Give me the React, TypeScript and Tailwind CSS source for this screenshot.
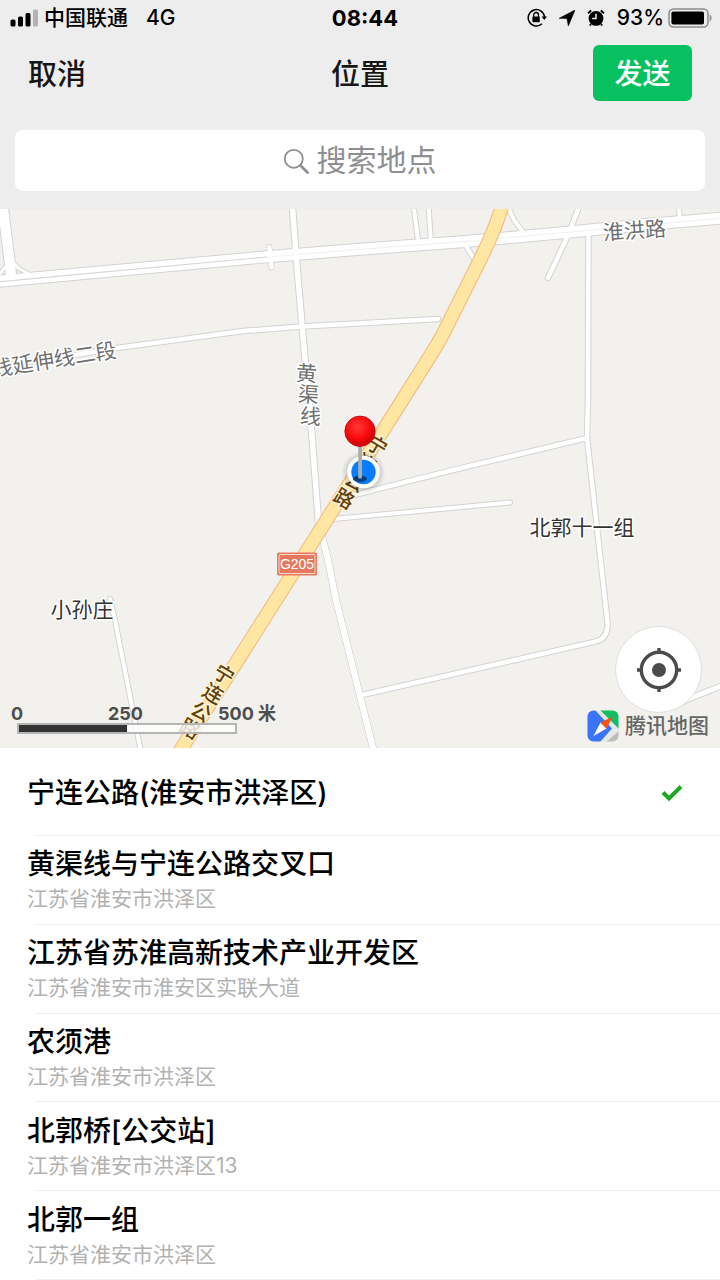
import React from "react";

type Place = { name: string; address?: string };

const places: Place[] = [
  { name: "宁连公路(淮安市洪泽区)" },
  { name: "黄渠线与宁连公路交叉口", address: "江苏省淮安市洪泽区" },
  { name: "江苏省苏淮高新技术产业开发区", address: "江苏省淮安市淮安区实联大道" },
  { name: "农须港", address: "江苏省淮安市洪泽区" },
  { name: "北郭桥[公交站]", address: "江苏省淮安市洪泽区13" },
  { name: "北郭一组", address: "江苏省淮安市洪泽区" },
];

function StatusBar() {
  return (
    <div className="grid h-9 grid-cols-[1fr_auto_1fr] items-center pr-2 pl-[10px] text-[21px] leading-7 text-black">
      <div className="flex items-center gap-[6px] font-medium">
        <svg className="h-[18px] w-7" viewBox="0 0 28 18" aria-hidden="true">
          <rect x="0.5" y="10.5" width="5" height="7" rx="1.6" />
          <rect x="8" y="7.5" width="5" height="10" rx="1.6" />
          <rect x="15.5" y="4" width="5" height="13.5" rx="1.6" />
          <rect x="23" y="0.5" width="5" height="17" rx="1.6" fill="#b3b3b3" />
        </svg>
        <span>中国联通</span>
        <span className="ml-3">4G</span>
      </div>
      <div className="pl-2 text-center text-[22px] font-bold">08:44</div>
      <div className="flex items-center justify-end">
        <svg className="mr-3 h-5 w-5" viewBox="0 0 20 20" aria-hidden="true">
          <path d="M15 15.8A8.2 8.2 0 1 1 17.6 9.2" fill="none" stroke="#000" strokeWidth="1.5" />
          <path d="M14.6 8.4h5.4l-2.7 3.6z" />
          <rect x="5.4" y="8.6" width="7.4" height="5.6" rx="0.8" />
          <path d="M6.7 9V6.9a2.4 2.4 0 0 1 4.8 0V9" fill="none" stroke="#000" strokeWidth="1.3" />
        </svg>
        <svg className="mr-3 h-4 w-4" viewBox="0 0 16 16" aria-hidden="true">
          <path d="M16 0 9.3 16 8 8.6.2 8.3z" stroke="#000" strokeWidth="0.6" strokeLinejoin="round" />
        </svg>
        <svg className="mr-3 h-[18px] w-[18px]" viewBox="0 0 18 18" aria-hidden="true">
          <circle cx="9" cy="9.4" r="7.4" />
          <path d="m4 15-1.2 1.600M14 15l1.200 1.600" stroke="#000" strokeWidth="1.800" />
          <path d="M1 4.300 4.200 1.400M17 4.300l-3.200-2.900" stroke="#000" strokeWidth="2" />
          <path d="M9 4.800v4.800H5.200" fill="none" stroke="#ededed" strokeWidth="1.500" />
        </svg>
        <span className="mr-1 font-medium">93%</span>
        <svg className="h-5 w-11 shrink-0" viewBox="0 0 44 20" aria-hidden="true">
          <rect x="1" y="1" width="39" height="18" rx="4.5" fill="none" stroke="#8a8a8a" strokeWidth="1.5" />
          <rect x="3.4" y="3.4" width="32.600" height="13.2" rx="1.8" />
          <path d="M41.600 6.5c2.800 1 2.800 6 0 7z" fill="#9a9a9a" />
        </svg>
      </div>
    </div>
  );
}

const minorRoads: [string, number][] = [
  ["M0 366 75 355 117 348 243 331 302 326.500 438 319", 4.5],
  ["M269.300 247 271.600 267.500", 4],
  ["M413.500 205 418.500 244", 4],
  ["M428.500 205 431 243", 4],
  ["M507 205 514 220 526 236", 4],
  ["M464 243 476 262", 4],
  ["M580 204 569 233 548 278", 4.5],
  ["M678.500 205 680.500 224", 4],
  ["M588.400 234 588 400 587 438 607.500 622Q608.500 639 595 641.600L480 668 364 694.500", 4.5],
  ["M587 438 460 468.300 350 496", 4.5],
  ["M328 519.500 510 502.500", 4],
  ["M680 703 693 697 724 685", 5],
  ["M110 599 115 620 141 752", 4],
];

const highwayNames = [
  ["宁", 377, 446], ["连", 366, 464], ["公", 355, 482], ["路", 344, 499],
  ["宁", 224, 675], ["连", 213, 694], ["公", 201, 712], ["路", 190, 729],
] as const;

function RoadMap() {
  const main = "M-4 281.500 267 256.800 360 249.300 465 241.500 560 233 640 225 724 218";
  const huangqu = "M292.300 205 296 255 302 325 311.500 430 318.500 522 328 560 336 600 374 752";
  const highway = "M503 203Q496 228 480 260L443 334Q438 344 415 380L276 600 178 754";
  return (
    <svg
      className="block h-full w-full"
      viewBox="0 209 720 539"
      preserveAspectRatio="xMidYMid slice"
      role="img"
      aria-label="地图"
    >
      <defs>
        <radialGradient id="pin" cx="42%" cy="35%" r="65%">
          <stop offset="0" stopColor="#ff3a36" />
          <stop offset="0.6" stopColor="#f80a0e" />
          <stop offset="1" stopColor="#c90008" />
        </radialGradient>
        <radialGradient id="glow">
          <stop offset="0.7" stopColor="#000" stopOpacity="0.16" />
          <stop offset="1" stopColor="#000" stopOpacity="0" />
        </radialGradient>
      </defs>
      <rect y="209" width="720" height="539" fill="#f2f1ed" />

      <g fill="none" strokeLinecap="round" strokeLinejoin="round">
        <g stroke="#d3d3d3">
          {minorRoads.map(([d, w]) => (
            <path key={d} d={d} strokeWidth={w + 2} />
          ))}
          <path d="M13 262 18 268 28 273.500M8 264 -3 277" strokeWidth="5" />
          <path d="M2.500 204 10 265 12 280" strokeWidth="12" strokeLinecap="butt" />
          <path d={main} strokeWidth="13" />
          <path d={huangqu} strokeWidth="7.500" />
        </g>
        <g stroke="#fff">
          {minorRoads.map(([d, w]) => (
            <path key={d} d={d} strokeWidth={w} />
          ))}
          <path d="M13 262 18 268 28 273.500M8 264 -3 277" strokeWidth="3" />
          <path d={main} strokeWidth="11" />
          <path d={huangqu} strokeWidth="5.500" />
          <path d="M318.500 522 328 560 336 600 374 752" strokeWidth="6" />
        </g>
        <path d="M-4 282 267 257" stroke="#d6d6d6" strokeWidth="1.200" />
        <path d="M267 257 360 249.300 465 241.500 560 233 724 218" stroke="#f0f0f0" strokeWidth="1" />
        <path d="M2.500 204 10 265 11.500 280" stroke="#fff" strokeWidth="10" strokeLinecap="butt" />
        <path d="M269.300 247 271.600 267.500M295.800 245 296.800 265" stroke="#fff" strokeWidth="4" />
        <path d={highway} stroke="#f3b77e" strokeWidth="14.500" />
        <path d={highway} stroke="#ffe6a3" strokeWidth="12.500" />
      </g>

      <g
        className="font-['Noto_Sans_CJK_SC',sans-serif] text-[21px]"
        stroke="#fff"
        strokeWidth="3"
        strokeLinejoin="round"
        paintOrder="stroke"
        textAnchor="middle"
      >
        <g fill="#707070">
          <text transform="translate(635 238) rotate(-4)">淮洪路</text>
          <text transform="translate(55 367) rotate(-9)">线延伸线二段</text>
          <text transform="translate(306 381) rotate(4)">黄</text>
          <text transform="translate(308 402) rotate(4)">渠</text>
          <text transform="translate(310 424) rotate(4)">线</text>
        </g>
        <g fill="#333">
          <text x="82" y="617">小孙庄</text>
          <text x="582" y="535">北郭十一组</text>
        </g>
        <g fill="#603f0c" className="text-xl font-medium" stroke="#fff3d6" strokeWidth="3">
          {highwayNames.map(([c, x, y]) => (
            <text key={`${c}${y}`} transform={`translate(${x} ${y}) rotate(31)`} dy="7">
              {c}
            </text>
          ))}
        </g>
      </g>

      <rect x="277" y="552.500" width="40" height="23" rx="1.500" fill="#e5795f" />
      <rect x="279" y="554.500" width="36" height="19" rx="1" fill="none" stroke="#f8d6cd" strokeWidth="1" />
      <text x="297" y="569" textAnchor="middle" fill="#fff" className="font-['Liberation_Sans',sans-serif] text-sm">
        G205
      </text>

      <circle cx="363.500" cy="472.500" r="22" fill="url(#glow)" />
      <circle cx="363.500" cy="472" r="16.200" fill="#fff" />
      <circle cx="363.500" cy="472" r="12.200" fill="#0a7cff" />
      <ellipse cx="360" cy="478.700" rx="7" ry="3.200" fill="#08407f" />
      <rect x="358.200" y="445" width="3.800" height="33.500" rx="1.500" fill="#adadad" />
      <circle cx="360" cy="431.300" r="15.200" fill="url(#pin)" stroke="#c50a10" strokeWidth="0.800" />
    </svg>
  );
}

function ScaleBar() {
  return (
    <div className="absolute bottom-[14px] left-[10px] w-[270px] text-[#4d4d4d]">
      <div className="flex h-[19px] text-[18px] leading-5 font-bold">
        <span className="w-[98px] pl-[1px]">0</span>
        <span className="w-[110px]">250</span>
        <span className="whitespace-nowrap">500 米</span>
      </div>
      <div className="ml-[7px] flex h-[11px] w-[220px] border-2 border-[#b5b5b5] bg-white/80">
        <div className="w-1/2 bg-[#333]" />
      </div>
    </div>
  );
}

function MapBrand() {
  return (
    <div className="absolute right-[11px] bottom-[6px] flex items-center gap-[6px]">
      <svg className="h-8 w-8" viewBox="0 0 32 32" aria-hidden="true">
        <clipPath id="brand">
          <rect x="0.500" y="0.500" width="31" height="31" rx="6" />
        </clipPath>
        <g clipPath="url(#brand)">
          <path d="M0 0h32v32H0z" fill="#e6e8e8" />
          <path d="M0 0h8l17 18.500L13 32H0z" fill="#3b74f6" />
          <path d="M13 0h19v19z" fill="#12be64" />
          <path d="M32 21v11H19z" fill="#bdbdbd" />
          <path d="m6.500 26 7-13.500 6 6z" fill="#fff" />
          <path d="m25.800 6.500-12.300 6 6 6z" fill="#fa5115" />
        </g>
      </svg>
      <span className="text-[21px] leading-7 font-medium text-[#666]">腾讯地图</span>
    </div>
  );
}

export default function App() {
  const [selected, setSelected] = React.useState(0);
  return (
    <main className="flex min-h-screen flex-col bg-white font-['Inter','Noto_Sans_CJK_SC',sans-serif]">
      <header className="bg-[#ededed] pb-[18px]">
        <StatusBar />
        <nav className="grid h-[74px] grid-cols-3 items-center px-7 text-[29px] leading-10 text-[#161616]">
          <button type="button" className="justify-self-start pt-1 font-medium">取消</button>
          <h1 className="pt-1 text-center font-medium">位置</h1>
          <button
            type="button"
            className="h-14 w-[99px] justify-self-end rounded-md bg-[#07c160] pt-[2px] text-[28px] font-medium text-white"
          >
            发送
          </button>
        </nav>
        <label className="mx-[15px] mt-5 flex h-[61px] items-center justify-center gap-2 rounded-lg bg-white">
          <svg className="h-[26px] w-[26px]" viewBox="0 0 26 26" fill="none" stroke="#8e8e93" aria-hidden="true">
            <circle cx="10.800" cy="10.800" r="9" strokeWidth="1.800" />
            <path d="m17.500 17.500 7 7" strokeWidth="2.800" strokeLinecap="round" />
          </svg>
          <input
            type="text"
            aria-label="搜索地点"
            placeholder="搜索地点"
            className="h-11 w-[121px] bg-transparent text-[30px] text-black outline-none placeholder:text-[#8e8e93]"
          />
        </label>
      </header>

      <section className="relative h-[539px] shrink-0 overflow-hidden">
        <RoadMap />
        <ScaleBar />
        <MapBrand />
        <button
          type="button"
          aria-label="定位"
          className="absolute right-[18px] bottom-[35px] flex h-[87px] w-[87px] items-center justify-center rounded-full border border-[#dedede] bg-white"
        >
          <svg className="h-11 w-11" viewBox="0 0 44 44" aria-hidden="true">
            <circle cx="22" cy="22" r="17.700" fill="none" stroke="#4b4b4b" strokeWidth="3.400" />
            <circle cx="22" cy="22" r="7" fill="#4b4b4b" />
            <path d="M22 0v6M22 38v6M0 22h6M38 22h6" stroke="#4b4b4b" strokeWidth="3.400" />
          </svg>
        </button>
      </section>

      <ul className="flex flex-1 flex-col">
        {places.map((place, i) => (
          <li key={place.name} className="flex min-h-[88px] flex-1 flex-col">
            <button
              type="button"
              aria-pressed={selected === i}
              onClick={() => setSelected(i)}
              className="flex flex-1 items-center justify-between pt-[3px] pr-9 pl-[27px] text-left"
            >
              <span className="flex flex-col">
                <span className="text-[28px] leading-9 font-medium text-black">{place.name}</span>
                {place.address && <span className="text-[21px] leading-[34px] text-[#b2b2b2]">{place.address}</span>}
              </span>
              {selected === i && (
                <svg className="h-[18px] w-6" viewBox="0 0 24 18" fill="none" aria-hidden="true">
                  <path d="m3 8.500 6 6L21 2.500" stroke="#1fa824" strokeWidth="4" />
                </svg>
              )}
            </button>
            <div className="ml-[35px] h-px bg-[#f0f0f0]" />
          </li>
        ))}
      </ul>
    </main>
  );
}
